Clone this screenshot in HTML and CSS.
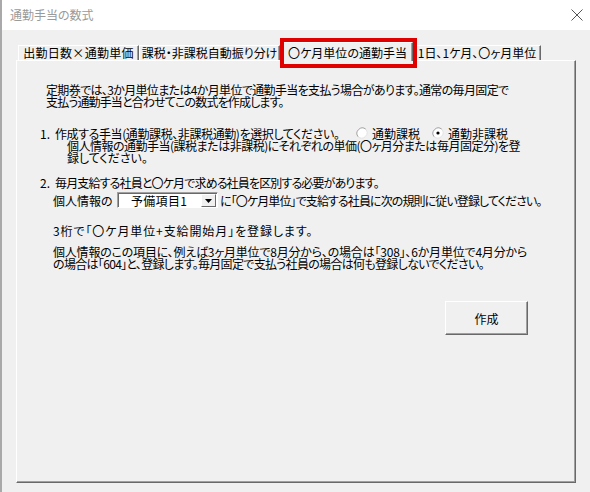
FILE: index.html
```html
<!DOCTYPE html>
<html lang="ja">
<head>
<meta charset="utf-8">
<link rel="stylesheet" href="styles.css">
</head>
<body>
<div class="window">
  <div class="titlebar">
    <span class="title">通勤手当の数式</span>
    <svg class="close" width="12" height="12" viewBox="0 0 12 12"><path d="M0.5 0.5 L11.5 11.5 M11.5 0.5 L0.5 11.5" stroke="#555" stroke-width="1" fill="none"/></svg>
  </div>
  <div class="client">
    <div class="tabs">
      <div class="tab t1">出勤日数×通勤単価</div>
      <div class="tab t2">課税・非課税自動振り分け</div>
      <div class="tab t3 selected">〇ケ月単位の通勤手当<span class="mark"></span></div>
      <div class="tab t4">1日、1ケ月、〇ヶ月単位</div>
    </div>
    <div class="panel">
      <div class="intro">
        <div class="line intro-1">定期券では、3か月単位または4か月単位で通勤手当を支払う場合があります。通常の毎月固定で</div>
        <div class="line intro-2">支払う通勤手当と合わせてこの数式を作成します。</div>
      </div>
      <div class="item item1">
        <span class="num">1.</span>
        <span class="txt txt1">作成する手当(通勤課税、非課税通勤)を選択してください。</span>
        <span class="radio r1"><svg width="12" height="12" viewBox="0 0 12 12"><circle cx="6" cy="6" r="5" fill="#fff"/><path d="M2.2 9.8 A5.4 5.4 0 0 1 9.8 2.2" stroke="#a0a0a0" stroke-width="1" fill="none"/><path d="M9.8 2.2 A5.4 5.4 0 0 1 2.2 9.8" stroke="#e3e3e3" stroke-width="1" fill="none"/></svg>通勤課税</span>
        <span class="radio"><svg width="12" height="12" viewBox="0 0 12 12"><circle cx="6" cy="6" r="5" fill="#fff"/><path d="M2.2 9.8 A5.4 5.4 0 0 1 9.8 2.2" stroke="#a0a0a0" stroke-width="1" fill="none"/><path d="M9.8 2.2 A5.4 5.4 0 0 1 2.2 9.8" stroke="#e3e3e3" stroke-width="1" fill="none"/><circle cx="6" cy="6" r="1.6" fill="#000"/></svg>通勤非課税</span>
      </div>
      <div class="sub1">
        <div class="line sub1-1">個人情報の通勤手当(課税または非課税)にそれぞれの単価(〇ヶ月分または毎月固定分)を登</div>
        <div class="line">録してください。</div>
      </div>
      <div class="item item2">
        <span class="num">2.</span>
        <span class="txt txt2">毎月支給する社員と〇ケ月で求める社員を区別する必要があります。</span>
      </div>
      <div class="combo-row">
        <span class="combo-label">個人情報の</span>
        <span class="combo"><span class="combo-text">予備項目1</span><span class="combo-btn"><svg width="7" height="4" viewBox="0 0 7 4"><path d="M0 0 H7 L3.5 4 Z" fill="#000"/></svg></span></span>
        <span class="combo-after">に「〇ケ月単位」で支給する社員に次の規則に従い登録してください。</span>
      </div>
      <div class="line rule">3桁で「〇ケ月単位+支給開始月」を登録します。</div>
      <div class="example">
        <div class="line ex-1">個人情報のこの項目に、例えば3ヶ月単位で8月分から、の場合は「308」、6か月単位で4月分から</div>
        <div class="line ex-2">の場合は「604」と、登録します。毎月固定で支払う社員の場合は何も登録しないでください。</div>
      </div>
      <div class="actions">
        <button class="btn">作成</button>
      </div>
    </div>
  </div>
</div>
</body>
</html>
```

FILE: styles.css
```css
* { box-sizing: border-box; }
html, body { margin: 0; padding: 0; }
body {
  width: 590px;
  height: 492px;
  overflow: hidden;
  background: #f0f0f0;
  font-family: "Noto Sans CJK JP", "Noto Sans", sans-serif;
  font-size: 12px;
  color: #000;
  font-feature-settings: "palt";
}
.window {
  height: 492px;
  border-left: 2px solid #a9a9a9;
  display: flex;
  flex-direction: column;
}
.titlebar {
  height: 30px;
  background: #fff;
  display: flex;
  align-items: center;
  justify-content: space-between;
  padding: 0 7px 0 8px;
}
.title {
  color: #9a9a9a;
  font-size: 12px;
  line-height: 12px;
}
.close { display: block; }
.client {
  flex: 1;
  padding: 12px 0 0 14px;
}
.tabs {
  display: flex;
  align-items: flex-end;
  height: 18px;
  padding-left: 2px;
  position: relative;
  z-index: 1;
}
.tab {
  height: 15px;
  border-top: 1px solid #fff;
  border-left: 1px solid #fff;
  border-right: 1px solid #696969;
  box-shadow: inset -1px 0 0 #a0a0a0;
  display: flex;
  align-items: center;
  justify-content: center;
  white-space: nowrap;
  font-size: 12px;
  line-height: 14px;
  background: #f0f0f0;
}
.t1 { width: 121px; letter-spacing: 0.3px; }
.t2 { width: 141px; }
.t3 { width: 131px; margin-left: 2px; }
.t4 { width: 128px; }
.tab.selected {
  height: 19px;
  margin-bottom: -1px;
  position: relative;
  align-items: flex-start;
  padding-top: 3px;
}
.mark {
  position: absolute;
  left: -3px;
  top: -5px;
  width: 137px;
  height: 30px;
  border: 4px solid #e10000;
}
.panel {
  width: 560px;
  height: 423px;
  border-top: 1px solid #fff;
  border-left: 1px solid #fff;
  border-right: 1px solid #696969;
  border-bottom: 1px solid #696969;
  box-shadow: inset -1px -1px 0 #a0a0a0;
  padding: 23px 0 0 23px;
  display: flex;
  flex-direction: column;
}
.line {
  line-height: 12px;
  height: 12px;
  white-space: nowrap;
}
.intro { margin-left: 6px; }
.intro-1 { letter-spacing: -0.65px; }
.intro-2 { letter-spacing: -0.85px; }
.item {
  display: flex;
  align-items: center;
  height: 14px;
  white-space: nowrap;
}
.item1 { margin-top: 18px; }
.num { width: 15px; }
.txt1 { letter-spacing: -0.4px; width: 301px; }
.txt2 { letter-spacing: -0.85px; }
.radio {
  display: flex;
  align-items: center;
  gap: 4px;
}
.r1 { width: 76px; }
.radio svg { display: block; }
.sub1 { margin-left: 27px; }
.sub1-1 { letter-spacing: -0.5px; }
.item2 { margin-top: 11px; }
.combo-row {
  margin-top: 3px;
  margin-left: 13px;
  display: flex;
  align-items: center;
  height: 16px;
  white-space: nowrap;
}
.combo-label { width: 64px; }
.combo-after { letter-spacing: -0.9px; }
.combo {
  width: 101px;
  height: 16px;
  margin: 0 2px 0 0;
  background: #fff;
  border-top: 1px solid #a0a0a0;
  border-left: 1px solid #a0a0a0;
  border-right: 1px solid #fff;
  border-bottom: 1px solid #fff;
  box-shadow: inset 1px 1px 0 #696969;
  display: flex;
  align-items: center;
  justify-content: space-between;
  padding: 1px 1px 0 13px;
}
.combo-text { line-height: 12px; letter-spacing: 0.3px; }
.combo-btn {
  width: 15px;
  height: 13px;
  background: #f0f0f0;
  border-top: 1px solid #fff;
  border-left: 1px solid #fff;
  border-right: 1px solid #696969;
  border-bottom: 1px solid #696969;
  display: flex;
  align-items: center;
  justify-content: center;
}
.combo-btn svg { display: block; }
.rule { margin-top: 17px; margin-left: 13px; letter-spacing: 0.9px; }
.example { margin-top: 9px; margin-left: 13px; }
.ex-1 { letter-spacing: -0.2px; }
.ex-2 { letter-spacing: -0.68px; }
.actions {
  display: flex;
  justify-content: flex-end;
  margin-top: 31px;
  padding-right: 47px;
}
.btn {
  width: 83px;
  height: 34px;
  font-family: inherit;
  font-size: 12px;
  background: #f0f0f0;
  border-top: 1px solid #fff;
  border-left: 1px solid #fff;
  border-right: 1px solid #696969;
  border-bottom: 1px solid #696969;
  box-shadow: inset -1px -1px 0 #a0a0a0;
  padding: 0;
  color: #000;
}
```
